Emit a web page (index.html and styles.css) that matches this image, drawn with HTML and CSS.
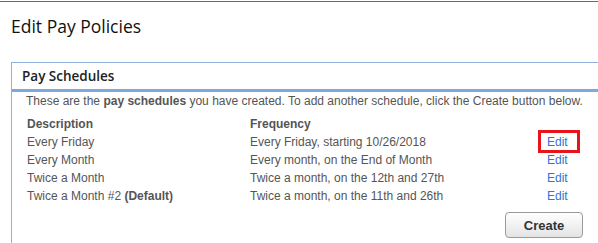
FILE: index.html
```html
<!DOCTYPE html>
<html lang="en">
<head>
    <meta charset="UTF-8">
    <meta name="viewport" content="width=device-width, initial-scale=1.0">
    <title>Edit Pay Policies</title>
    <link rel="stylesheet" href="styles.css">
</head>
<body>
    <div class="page">
        <h1 class="page-title">Edit Pay Policies</h1>

        <div class="panel">
            <div class="panel-header">Pay Schedules</div>
            <div class="panel-body">
                <p class="intro">These are the <b>pay schedules</b> you have created. To add another schedule, click the Create button below.</p>

                <div class="schedule-table">
                    <div class="cell head">Description</div>
                    <div class="cell head">Frequency</div>
                    <div class="cell"></div>

                    <div class="cell">Every Friday</div>
                    <div class="cell">Every Friday, starting 10/26/2018</div>
                    <div class="cell"><a href="#" class="edit-link marked">Edit</a></div>

                    <div class="cell">Every Month</div>
                    <div class="cell">Every month, on the End of Month</div>
                    <div class="cell"><a href="#" class="edit-link">Edit</a></div>

                    <div class="cell">Twice a Month</div>
                    <div class="cell">Twice a month, on the 12th and 27th</div>
                    <div class="cell"><a href="#" class="edit-link">Edit</a></div>

                    <div class="cell">Twice a Month #2 <b>(Default)</b></div>
                    <div class="cell">Twice a month, on the 11th and 26th</div>
                    <div class="cell"><a href="#" class="edit-link">Edit</a></div>
                </div>

                <div class="actions">
                    <button class="create-button">Create</button>
                </div>
            </div>
        </div>
    </div>
</body>
</html>
```

FILE: styles.css
```css
body {
    margin: 0;
    font-family: "Liberation Sans", Arial, sans-serif;
    font-size: 12px;
    color: #555;
    background-color: white;
}
.page {
    margin-top: 1px;
    border-top: 1px solid #4a6f9a;
    height: 241px;
    overflow: hidden;
}
.page-title {
    margin: 12px 0 0 11px;
    height: 48px;
    font-family: "Open Sans", sans-serif;
    font-size: 17.5px;
    font-weight: normal;
    line-height: 24px;
    color: #111;
}
.panel {
    margin-left: 11px;
    border-top: 1px solid #8fb3dd;
    border-left: 1px solid #8fb3dd;
    height: 200px;
}
.panel-header {
    height: 26px;
    padding-left: 10px;
    border-bottom: 3px solid #7fa9dc;
    font-family: "Open Sans", sans-serif;
    font-size: 13.5px;
    font-weight: 600;
    line-height: 26px;
    color: #222;
}
.panel-body {
    padding: 0 0 0 14px;
}
.intro {
    margin: 0;
    line-height: 18px;
}
.schedule-table {
    display: grid;
    grid-template-columns: 223px 297px 40px;
    margin-top: 5px;
    margin-left: 1px;
}
.cell {
    line-height: 18px;
    white-space: nowrap;
}
.head {
    font-weight: bold;
}
.edit-link {
    color: #2f74d8;
    text-decoration: none;
    position: relative;
}
.marked::after {
    content: "";
    position: absolute;
    left: -9px;
    right: -12px;
    top: -5px;
    bottom: -4px;
    border: 3px solid #e8141b;
}
.actions {
    display: flex;
    justify-content: flex-end;
    width: 557px;
    margin-top: 7px;
}
.create-button {
    width: 78px;
    height: 26px;
    font-family: "Liberation Sans", Arial, sans-serif;
    font-size: 13px;
    font-weight: bold;
    color: #333;
    background: linear-gradient(#ffffff, #e4e4e4);
    border: 1px solid #9a9a9a;
    border-radius: 4px;
    cursor: pointer;
}
```
